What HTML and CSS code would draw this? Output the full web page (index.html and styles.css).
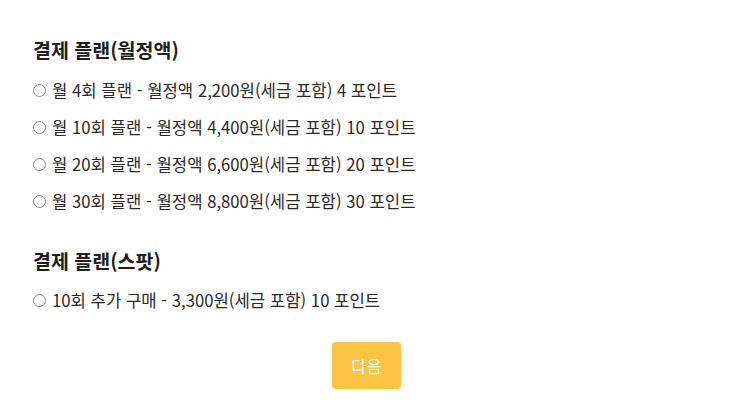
FILE: index.html
```html
<!DOCTYPE html>
<html lang="ko">
  <head>
    <meta charset="UTF-8" />
    <meta name="viewport" content="width=device-width, initial-scale=1.0" />
    <title>결제 플랜</title>
    <link rel="stylesheet" href="styles.css">
  </head>
  <body>
    <form class="plan-form">
      <!-- Monthly plans -->
      <div class="plan-group">
        <h2>결제 플랜(월정액)</h2>
        <ul>
          <li><label><input type="radio" name="plan" value="m4" /> 월 4회 플랜 - 월정액 2,200원(세금 포함) 4 포인트</label></li>
          <li><label><input type="radio" name="plan" value="m10" /> 월 10회 플랜 - 월정액 4,400원(세금 포함) 10 포인트</label></li>
          <li><label><input type="radio" name="plan" value="m20" /> 월 20회 플랜 - 월정액 6,600원(세금 포함) 20 포인트</label></li>
          <li><label><input type="radio" name="plan" value="m30" /> 월 30회 플랜 - 월정액 8,800원(세금 포함) 30 포인트</label></li>
        </ul>
      </div>

      <!-- Spot purchase -->
      <div class="plan-group spot">
        <h2>결제 플랜(스팟)</h2>
        <ul>
          <li><label><input type="radio" name="plan" value="s10" /> 10회 추가 구매 - 3,300원(세금 포함) 10 포인트</label></li>
        </ul>
      </div>

      <div class="actions">
        <button type="button" class="next-btn">다음</button>
      </div>
    </form>
  </body>
</html>
```

FILE: styles.css
```css
* {
  margin: 0;
  padding: 0;
  box-sizing: border-box;
}

body {
  font-family: "Noto Sans CJK KR", "Noto Sans", sans-serif;
  background: #ffffff;
  color: #222222;
}

.plan-form {
  padding: 37px 33px 0 33px;
}

.plan-group h2 {
  font-size: 19.5px;
  line-height: 26px;
  font-weight: bold;
  color: #1e1e1e;
  margin-bottom: 9px;
}

.plan-group ul {
  list-style: none;
}

.plan-group li {
  font-size: 16.7px;
  line-height: 37px;
  color: #2a2a2a;
}

.plan-group label {
  display: flex;
  align-items: center;
  gap: 6px;
  cursor: pointer;
}

.plan-group input[type="radio"] {
  width: 13px;
  height: 13px;
  margin: 0;
  appearance: none;
  border: 1px solid #8a8a8a;
  border-radius: 50%;
  background: #fff;
}

.plan-group input[type="radio"]:checked {
  background: radial-gradient(circle, #555 0 3px, #fff 3.5px);
}

.spot {
  margin-top: 28px;
}

.spot h2 {
  margin-bottom: 8px;
}

.actions {
  display: flex;
  justify-content: center;
  margin-top: 23px;
  padding-right: 4px;
}

.next-btn {
  width: 69px;
  height: 47px;
  border: none;
  border-radius: 4px;
  background-color: #fbc443;
  color: #ffffff;
  font-family: inherit;
  font-size: 16.5px;
  cursor: pointer;
}

.next-btn:hover {
  background-color: #f5b82a;
}
```
